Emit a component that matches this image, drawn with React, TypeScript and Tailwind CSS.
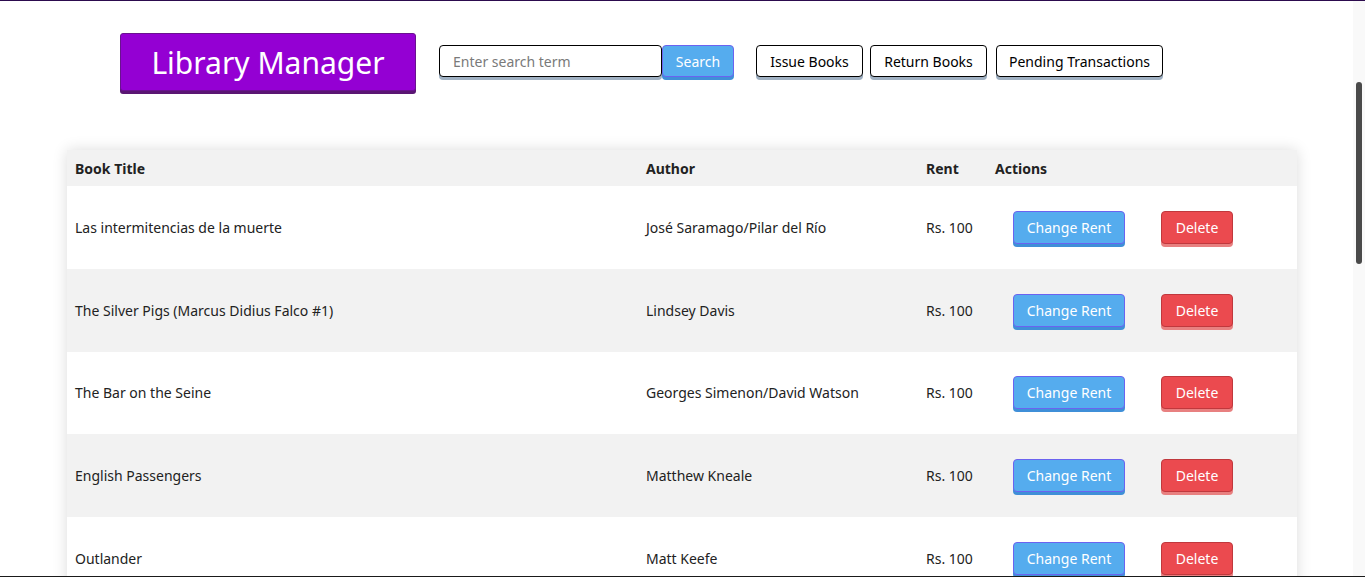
import React from 'react';

const books = [
  { title: 'Las intermitencias de la muerte', author: 'José Saramago/Pilar del Río', rent: 100 },
  { title: 'The Silver Pigs (Marcus Didius Falco #1)', author: 'Lindsey Davis', rent: 100 },
  { title: 'The Bar on the Seine', author: 'Georges Simenon/David Watson', rent: 100 },
  { title: 'English Passengers', author: 'Matthew Kneale', rent: 100 },
  { title: 'Outlander', author: 'Matt Keefe', rent: 100 },
];

const navBtn =
  'h-[32px] rounded-[4px] border border-black bg-white text-[14px] text-black shadow-[0_3px_0_#9fb0c2]';

const App: React.FC = () => {
  return (
    <div
      className="relative h-[577px] overflow-hidden border-t border-b border-t-[#2c0b4e] border-b-[#1a1a1a] bg-white text-[#222]"
      style={{ fontFamily: '"Noto Sans", "Open Sans", sans-serif' }}
    >
      {/* Header */}
      <div className="flex items-start pl-[120px] pt-[32px]">
        <button className="h-[58px] w-[296px] rounded-[3px] border border-[#6a1290] bg-[#9400d3] text-[30px] text-white shadow-[0_3px_0_#5a1673]">
          Library Manager
        </button>

        <div className="ml-[23px] mt-[12px] flex">
          <input
            className="h-[32px] w-[223px] rounded-[4px] border border-black bg-white px-[13px] text-[14px] outline-none shadow-[0_3px_0_#9fb0c2] placeholder:text-[#7a7a7a]"
            placeholder="Enter search term"
          />
          <button className="h-[32px] w-[72px] rounded-[4px] border border-[#6b63f0] bg-[#55acee] text-[14px] text-white shadow-[0_3px_0_#3f8fd8]">
            Search
          </button>
        </div>

        <div className="ml-[22px] mt-[12px] flex">
          <button className={`${navBtn} w-[107px]`}>Issue Books</button>
          <button className={`${navBtn} ml-[7px] w-[117px]`}>Return Books</button>
          <button className={`${navBtn} ml-[9px] w-[167px]`}>Pending Transactions</button>
        </div>
      </div>

      {/* Table */}
      <div className="ml-[67px] mt-[59px] w-[1230px] shadow-[0_0_14px_rgba(0,0,0,0.14)]">
        <table className="w-full border-collapse text-left text-[14px]">
          <thead>
            <tr className="h-[36px] bg-[#f2f2f2]">
              <th className="w-[571px] px-[8px] font-bold">Book Title</th>
              <th className="w-[280px] px-[8px] font-bold">Author</th>
              <th className="w-[69px] px-[8px] font-bold">Rent</th>
              <th className="px-[8px] font-bold">Actions</th>
            </tr>
          </thead>
          <tbody>
            {books.map((book, index) => (
              <tr key={index} className={`h-[82.75px] ${index % 2 === 1 ? 'bg-[#f2f2f2]' : 'bg-white'}`}>
                <td className="px-[8px]">{book.title}</td>
                <td className="px-[8px]">{book.author}</td>
                <td className="px-[8px]">Rs. {book.rent}</td>
                <td className="px-[8px]">
                  <div className="flex gap-[36px] pl-[18px]">
                    <button className="h-[33px] w-[112px] rounded-[4px] border border-[#6b63f0] bg-[#55acee] text-[14px] text-white shadow-[0_3px_0_#3f8fd8]">
                      Change Rent
                    </button>
                    <button className="h-[33px] w-[72px] rounded-[4px] border border-[#c0383d] bg-[#eb4a4f] text-[14px] text-white shadow-[0_3px_0_#e88080]">
                      Delete
                    </button>
                  </div>
                </td>
              </tr>
            ))}
          </tbody>
        </table>
      </div>

      {/* Scrollbar */}
      <div className="absolute right-0 top-0 h-full w-[12px] bg-[#f9f9f9]">
        <div className="absolute left-[3px] top-[81px] h-[182px] w-[6px] rounded-full bg-[#4a4a4a]" />
      </div>
    </div>
  );
};

export default App;
